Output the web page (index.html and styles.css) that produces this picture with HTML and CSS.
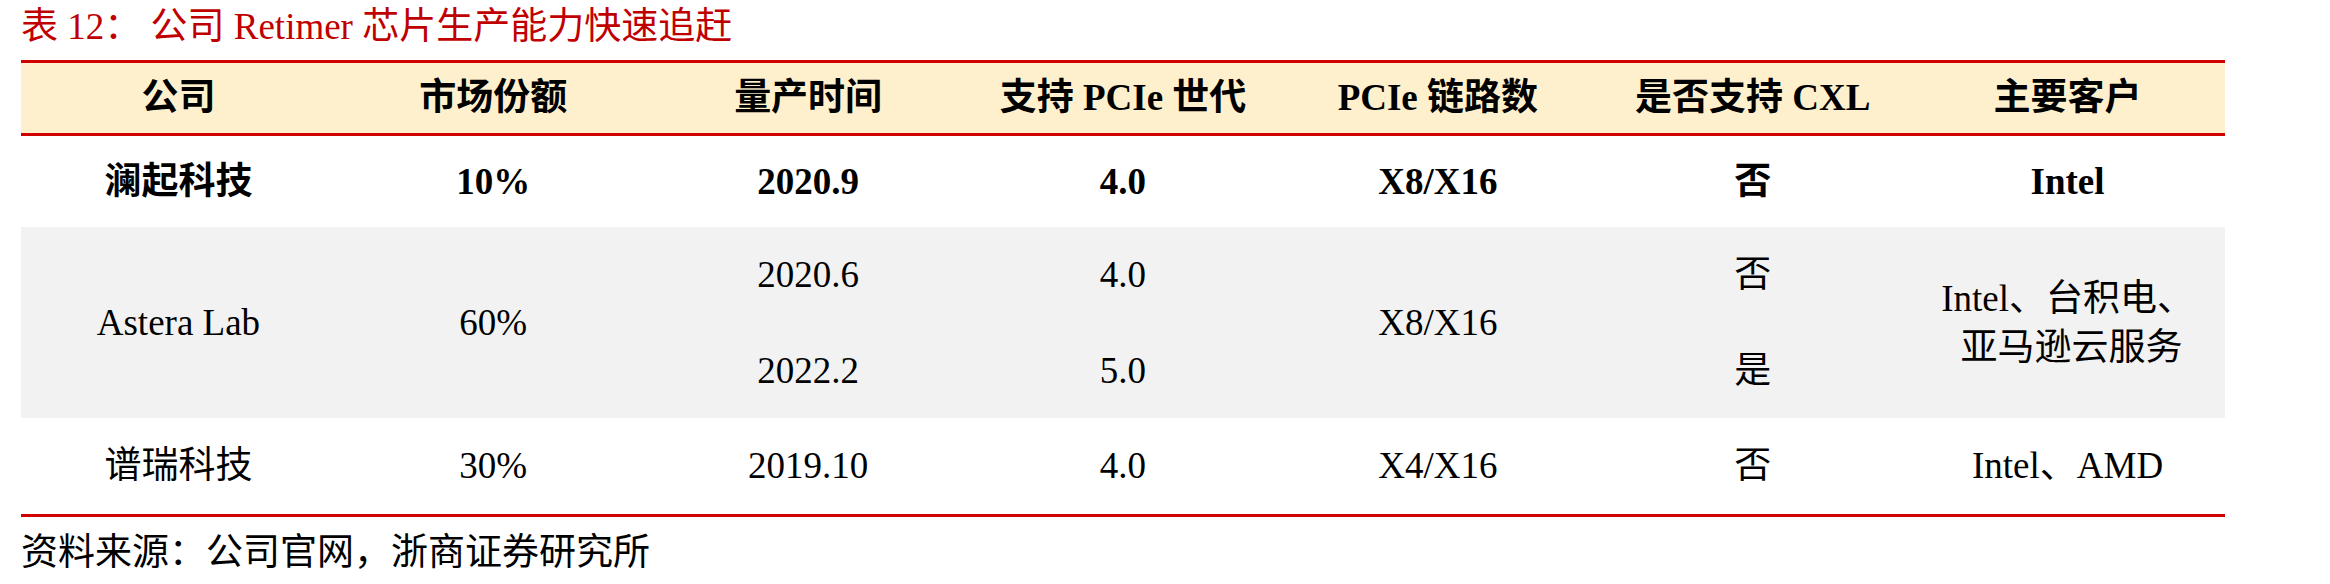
FILE: index.html
```html
<!DOCTYPE html>
<html lang="zh-CN">
<head>
<meta charset="utf-8">
<title>公司 Retimer 芯片生产能力快速追赶</title>
<link rel="stylesheet" href="styles.css">
</head>
<body>
<div class="page">
  <h1 class="title">表 12：&nbsp;公司 Retimer 芯片生产能力快速追赶</h1>
  <div class="table">
    <div class="row head">
      <div class="cell">公司</div>
      <div class="cell">市场份额</div>
      <div class="cell">量产时间</div>
      <div class="cell">支持 PCIe 世代</div>
      <div class="cell">PCIe 链路数</div>
      <div class="cell">是否支持 CXL</div>
      <div class="cell">主要客户</div>
    </div>
    <div class="row r1 bold">
      <div class="cell">澜起科技</div>
      <div class="cell">10%</div>
      <div class="cell">2020.9</div>
      <div class="cell">4.0</div>
      <div class="cell">X8/X16</div>
      <div class="cell">否</div>
      <div class="cell">Intel</div>
    </div>
    <div class="row r2 alt">
      <div class="cell span c1">Astera Lab</div>
      <div class="cell span c2">60%</div>
      <div class="cell c3">2020.6</div>
      <div class="cell c4">4.0</div>
      <div class="cell span c5">X8/X16</div>
      <div class="cell c6">否</div>
      <div class="cell span c7 multi">Intel、台积电、<br><span class="l2">亚马逊云服务</span></div>
      <div class="cell c3">2022.2</div>
      <div class="cell c4">5.0</div>
      <div class="cell c6">是</div>
    </div>
    <div class="row r3">
      <div class="cell">谱瑞科技</div>
      <div class="cell">30%</div>
      <div class="cell">2019.10</div>
      <div class="cell">4.0</div>
      <div class="cell">X4/X16</div>
      <div class="cell">否</div>
      <div class="cell">Intel、AMD</div>
    </div>
  </div>
  <p class="source">资料来源：公司官网，浙商证券研究所</p>
</div>
</body>
</html>
```
FILE: styles.css
```css
html, body {
  margin: 0;
  padding: 0;
  background: #ffffff;
}

body {
  font-family: "Liberation Serif", "Noto Sans CJK SC", serif;
  font-size: 37px;
  color: #000000;
}

.page {
  padding-left: 21px;
  width: 2204px;
}

.title {
  margin: 0 0 6px 0;
  font-size: 37px;
  font-weight: normal;
  line-height: 54px;
  height: 54px;
  color: #c00000;
  white-space: nowrap;
}

.table {
  border-top: 3px solid #d00000;
  border-bottom: 3px solid #d00000;
}

.row {
  display: grid;
  grid-template-columns: repeat(7, 1fr);
}

.cell {
  display: flex;
  align-items: center;
  justify-content: center;
  text-align: center;
  line-height: 48px;
  white-space: nowrap;
}

.head {
  height: 70px;
  background: #fef0cd;
  border-bottom: 3px solid #d00000;
  font-weight: bold;
}

.r1 {
  height: 91px;
}

.bold {
  font-weight: bold;
}

.alt {
  background: #f2f2f2;
}

.r2 {
  grid-template-rows: 96px 95px;
}

.r2 .span {
  grid-row: 1 / span 2;
}

.r2 .c1 { grid-column: 1; }
.r2 .c2 { grid-column: 2; }
.r2 .c3 { grid-column: 3; }
.r2 .c4 { grid-column: 4; }
.r2 .c5 { grid-column: 5; }
.r2 .c6 { grid-column: 6; }
.r2 .c7 { grid-column: 7; }

.multi {
  display: block;
  align-self: center;
  line-height: 49px;
  white-space: normal;
}

.l2 {
  padding-left: 8px;
}

.r3 {
  height: 96px;
}

.source {
  margin: 9px 0 0 0;
  line-height: 54px;
  font-size: 37px;
  white-space: nowrap;
}
```
